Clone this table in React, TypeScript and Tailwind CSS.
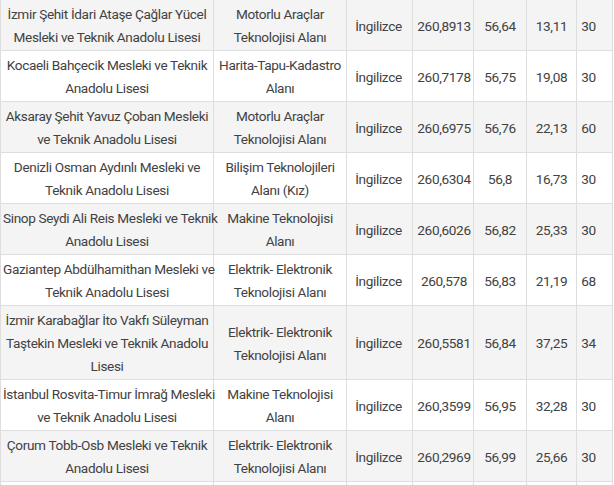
type Row = {
  school: string[]
  field: string[]
  lang: string
  score: string
  pct: string
  diff: string
  quota: string
}

const rows: Row[] = [
  {
    school: ["İzmir Şehit İdari Ataşe Çağlar Yücel", "Mesleki ve Teknik Anadolu Lisesi"],
    field: ["Motorlu Araçlar", "Teknolojisi Alanı"],
    lang: "İngilizce",
    score: "260,8913",
    pct: "56,64",
    diff: "13,11",
    quota: "30",
  },
  {
    school: ["Kocaeli Bahçecik Mesleki ve Teknik", "Anadolu Lisesi"],
    field: ["Harita-Tapu-Kadastro", "Alanı"],
    lang: "İngilizce",
    score: "260,7178",
    pct: "56,75",
    diff: "19,08",
    quota: "30",
  },
  {
    school: ["Aksaray Şehit Yavuz Çoban Mesleki", "ve Teknik Anadolu Lisesi"],
    field: ["Motorlu Araçlar", "Teknolojisi Alanı"],
    lang: "İngilizce",
    score: "260,6975",
    pct: "56,76",
    diff: "22,13",
    quota: "60",
  },
  {
    school: ["Denizli Osman Aydınlı Mesleki ve", "Teknik Anadolu Lisesi"],
    field: ["Bilişim Teknolojileri", "Alanı (Kız)"],
    lang: "İngilizce",
    score: "260,6304",
    pct: "56,8",
    diff: "16,73",
    quota: "30",
  },
  {
    school: ["Sinop Seydi Ali Reis Mesleki ve Teknik", "Anadolu Lisesi"],
    field: ["Makine Teknolojisi", "Alanı"],
    lang: "İngilizce",
    score: "260,6026",
    pct: "56,82",
    diff: "25,33",
    quota: "30",
  },
  {
    school: ["Gaziantep Abdülhamithan Mesleki ve", "Teknik Anadolu Lisesi"],
    field: ["Elektrik- Elektronik", "Teknolojisi Alanı"],
    lang: "İngilizce",
    score: "260,578",
    pct: "56,83",
    diff: "21,19",
    quota: "68",
  },
  {
    school: ["İzmir Karabağlar İto Vakfı Süleyman", "Taştekin Mesleki ve Teknik Anadolu", "Lisesi"],
    field: ["Elektrik- Elektronik", "Teknolojisi Alanı"],
    lang: "İngilizce",
    score: "260,5581",
    pct: "56,84",
    diff: "37,25",
    quota: "34",
  },
  {
    school: ["İstanbul Rosvita-Timur İmrağ Mesleki", "ve Teknik Anadolu Lisesi"],
    field: ["Makine Teknolojisi", "Alanı"],
    lang: "İngilizce",
    score: "260,3599",
    pct: "56,95",
    diff: "32,28",
    quota: "30",
  },
  {
    school: ["Çorum Tobb-Osb Mesleki ve Teknik", "Anadolu Lisesi"],
    field: ["Elektrik- Elektronik", "Teknolojisi Alanı"],
    lang: "İngilizce",
    score: "260,2969",
    pct: "56,99",
    diff: "25,66",
    quota: "30",
  },
]

const cell = "border border-[#dedede] pt-[3px] pb-[1px] text-center align-middle whitespace-nowrap"

const Lines = ({ lines }: { lines: string[] }) => (
  <>
    {lines.map((l) => (
      <span key={l} className="block">
        {l}
      </span>
    ))}
  </>
)

export default function App() {
  return (
    <div className="w-[614px] h-[485px] overflow-hidden bg-white">
      <table
        className="-mt-[1px] border-collapse table-fixed w-[612px] text-[13.6px] leading-[23px] tracking-[-0.35px] text-[#424242]"
        style={{ fontFamily: "Roboto, 'Noto Sans', sans-serif" }}
      >
        <colgroup>
          <col className="w-[213px]" />
          <col className="w-[133px]" />
          <col className="w-[66px]" />
          <col className="w-[61px]" />
          <col className="w-[53px]" />
          <col className="w-[50px]" />
          <col className="w-[36px]" />
        </colgroup>
        <tbody>
          {rows.map((r, i) => (
            <tr key={r.score} className={i % 2 === 0 ? "bg-[#f4f4f4]" : "bg-white"}>
              <td className={`${cell} px-[2px]`}>
                <Lines lines={r.school} />
              </td>
              <td className={`${cell} px-[2px]`}>
                <Lines lines={r.field} />
              </td>
              <td className={`${cell} pl-[2px] pr-[4px]`}>{r.lang}</td>
              <td className={`${cell} pl-[2px]`}>{r.score}</td>
              <td className={cell}>{r.pct}</td>
              <td className={cell}>{r.diff}</td>
              <td className={`${cell} pr-[12px]`}>{r.quota}</td>
            </tr>
          ))}
          <tr className="bg-white">
            <td className={`${cell} h-[51px]`} />
            <td className={cell} />
            <td className={cell} />
            <td className={cell} />
            <td className={cell} />
            <td className={cell} />
            <td className={cell} />
          </tr>
        </tbody>
      </table>
    </div>
  )
}
